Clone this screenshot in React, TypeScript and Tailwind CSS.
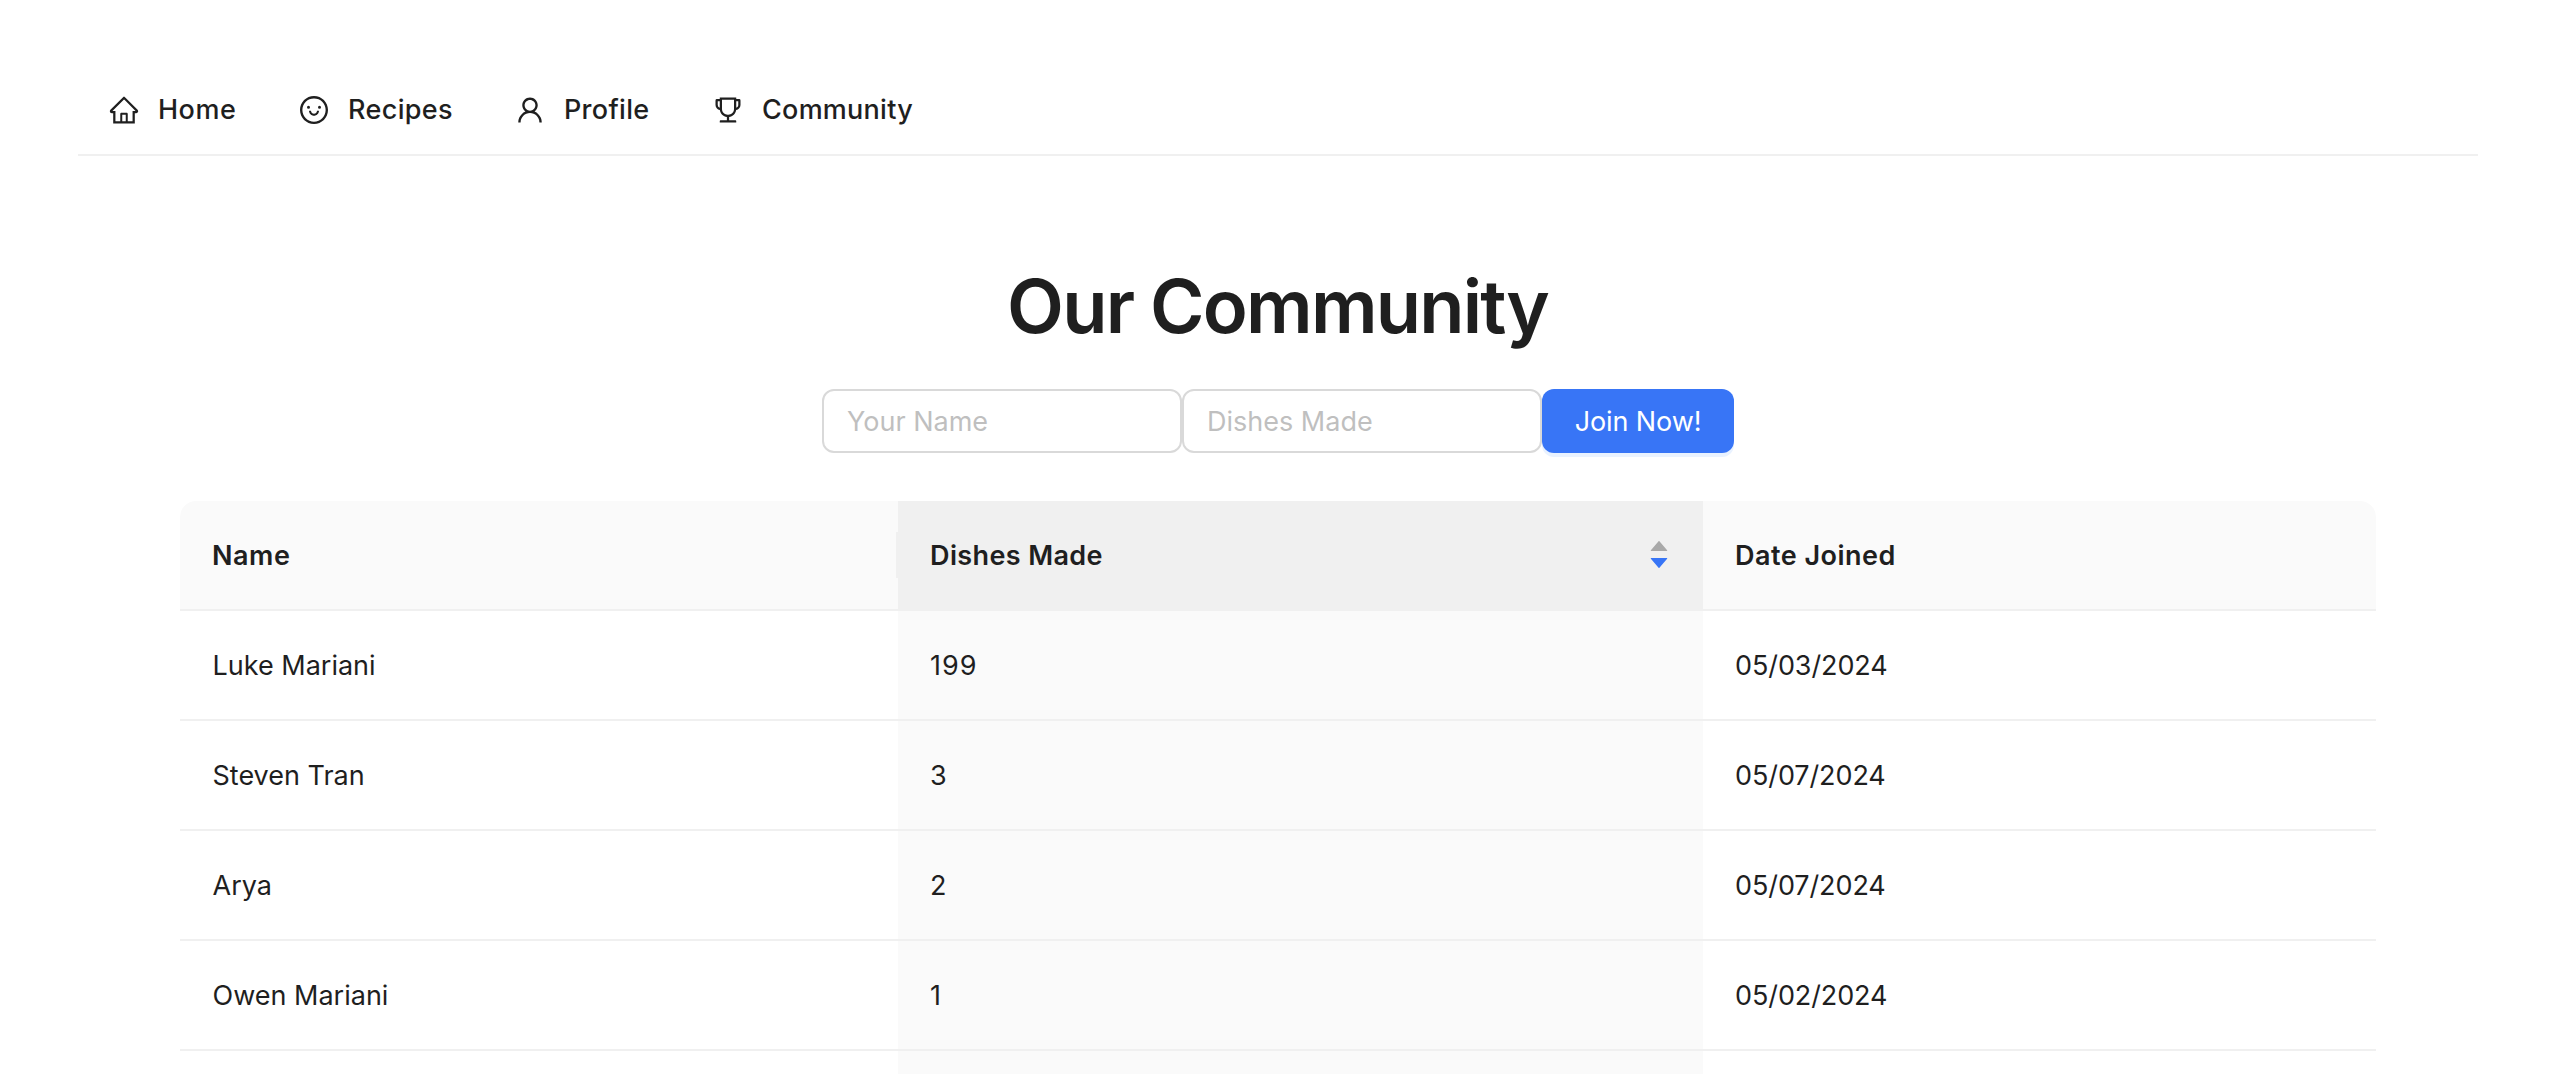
import {
  AiFillCaretDown,
  AiFillCaretUp,
  AiOutlineHome,
  AiOutlineSmile,
  AiOutlineTrophy,
  AiOutlineUser,
} from "react-icons/ai";

const navItems = [
  { label: "Home", icon: AiOutlineHome, width: "w-[190px]", tracking: "tracking-[0.5px]" },
  { label: "Recipes", icon: AiOutlineSmile, width: "w-[216px]", tracking: "tracking-[0.36px]" },
  { label: "Profile", icon: AiOutlineUser, width: "w-[198px]", tracking: "tracking-[0.3px]" },
  { label: "Community", icon: AiOutlineTrophy, width: "w-[240px]", tracking: "tracking-[0.26px]" },
];

const members = [
  { name: "Luke Mariani", dishes: 199, joined: "05/03/2024" },
  { name: "Steven Tran", dishes: 3, joined: "05/07/2024" },
  { name: "Arya", dishes: 2, joined: "05/07/2024" },
  { name: "Owen Mariani", dishes: 1, joined: "05/02/2024" },
  { name: "", dishes: null, joined: "" },
];

function Nav() {
  return (
    <nav className="flex h-[92px] border-b-2 border-[#f0f0f0] pl-[30px] pt-0.5 font-medium">
      {navItems.map(({ label, icon: Icon, width, tracking }) => (
        <a key={label} className={`flex h-full items-center ${width}`}>
          <Icon className="size-8 shrink-0" />
          <span className={`ml-[18px] ${tracking}`}>{label}</span>
        </a>
      ))}
    </nav>
  );
}

function JoinForm() {
  const input =
    "h-16 w-[360px] rounded-xl border-2 border-[#d9d9d9] bg-white pl-[23px] pr-5 outline-none placeholder:text-[#bfbfbf]";
  return (
    <form className="mt-[33px] flex justify-center">
      <input className={input} placeholder="Your Name" />
      <input className={input} placeholder="Dishes Made" />
      <button
        type="button"
        className="h-16 w-48 rounded-xl bg-[#3875f6] pt-0.5 tracking-[-0.1px] text-white shadow-[0_4px_0_#e9f2ff]"
      >
        Join Now!
      </button>
    </form>
  );
}

function MembersTable() {
  const row = "grid h-[110px] grid-cols-[718px_805px_1fr]";
  const cell = "flex items-center border-b-2 border-[#f0f0f0] px-8 pt-0.5";
  return (
    <div className="mx-auto mt-12 w-[2196px]">
      <div className={`${row} font-semibold`}>
        <div className={`${cell} relative rounded-tl-2xl bg-[#fafafa] tracking-[0.55px]`}>
          Name
          <span className="absolute right-0 top-[31px] h-[46px] w-0.5 bg-[#f0f0f0]" />
        </div>
        <div className={`${cell} justify-between bg-[#f0f0f0] tracking-[0.38px]`}>
          Dishes Made
          <span className="mb-[3px] flex flex-col">
            <AiFillCaretUp className="size-6 text-[#a9a9a9]" />
            <AiFillCaretDown className="-mt-[7px] size-6 text-[#3875f6]" />
          </span>
        </div>
        <div className={`${cell} rounded-tr-2xl bg-[#fafafa] tracking-[0.48px]`}>Date Joined</div>
      </div>
      {members.map(({ name, dishes, joined }, index) => (
        <div key={index} className={row}>
          <div className={`${cell} pl-[32.5px]`}>{name}</div>
          <div className={`${cell} bg-[#fafafa] tracking-[1px]`}>{dishes}</div>
          <div className={`${cell} tracking-[-0.1px]`}>{joined}</div>
        </div>
      ))}
    </div>
  );
}

export default function App() {
  return (
    <div className="h-[1074px] overflow-hidden bg-white pl-[78px] pr-[74px] pt-16 font-['Inter',sans-serif] text-[27px] leading-[44px] text-[#1f1f1f]">
      <Nav />
      <main>
        <h1 className="mt-[100px] pr-px text-center text-[74px] font-semibold leading-[100px] tracking-[-1.8px]">
          Our Community
        </h1>
        <JoinForm />
        <MembersTable />
      </main>
    </div>
  );
}
